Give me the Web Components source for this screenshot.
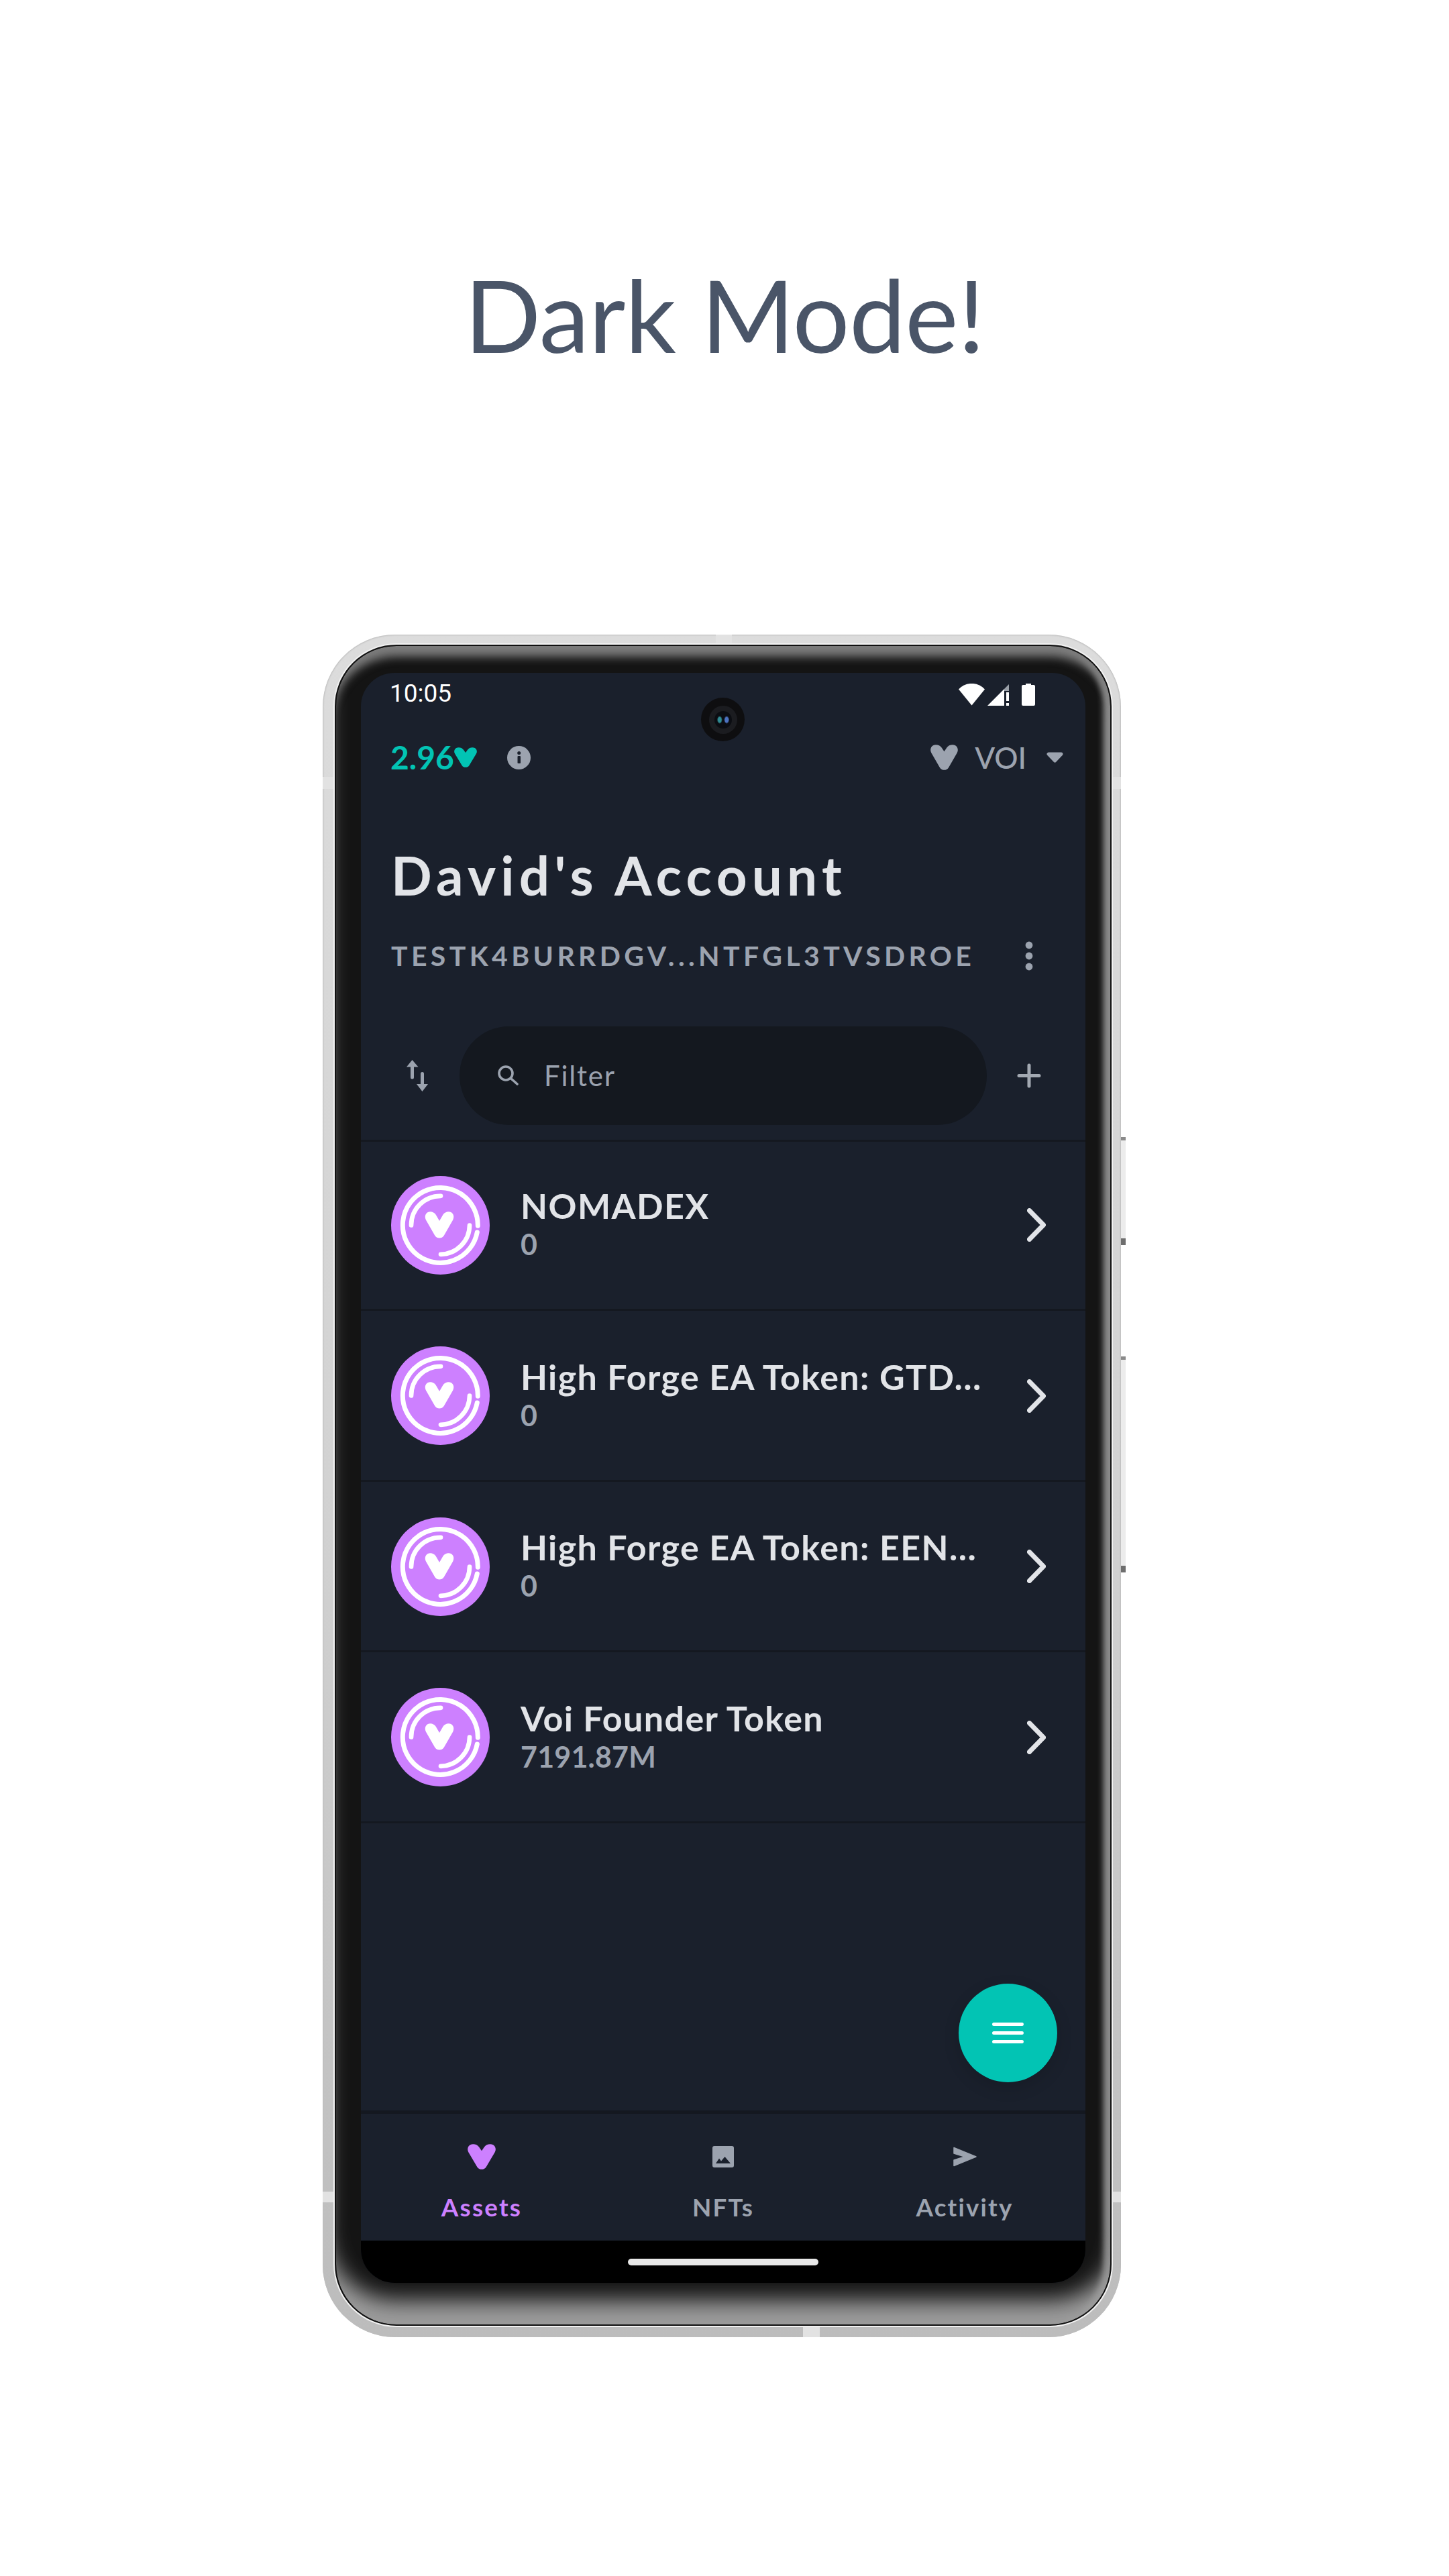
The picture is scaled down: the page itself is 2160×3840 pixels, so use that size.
<!DOCTYPE html>
<html>
<head>
<meta charset="utf-8">
<title>Dark Mode!</title>
<style>
  html, body { margin: 0; padding: 0; background: #fff; }
  body { font-family: 'Lato', 'Noto Sans', sans-serif; }
</style>
</head>
<body>
<store-page>
  <page-title slot="title">Dark Mode!</page-title>
  <phone-frame>
    <status-bar time="10:05"></status-bar>
    <app-bar balance="2.96" network="VOI"></app-bar>
    <account-header name="David's Account" address="TESTK4BURRDGV...NTFGL3TVSDROE"></account-header>
    <filter-bar placeholder="Filter"></filter-bar>
    <asset-list>
      <asset-row name="NOMADEX" amount="0"></asset-row>
      <asset-row name="High Forge EA Token: GTD..." amount="0"></asset-row>
      <asset-row name="High Forge EA Token: EEN..." amount="0"></asset-row>
      <asset-row name="Voi Founder Token" amount="7191.87M"></asset-row>
      <fab-button></fab-button>
    </asset-list>
    <bottom-nav></bottom-nav>
  </phone-frame>
</store-page>

<script>
const HEART = 'M64 42 L48 14 C40 1 22 -3 11 4 C0 11 -3 25 4 38 L44 108 C53 122 75 122 84 108 L124 38 C131 25 128 11 117 4 C106 -3 88 1 80 14 Z';
// the small hearts have a shallower notch than the one on the coin
const HEART_SMALL = 'M64 32 L52 14 C44 1 24 -3 12 4 C1 11 -3 25 4 38 L44 108 C53 122 75 122 84 108 L124 38 C131 25 127 11 116 4 C104 -3 84 1 76 14 Z';

function define(tag, render) {
  customElements.define(tag, class extends HTMLElement {
    constructor() {
      super();
      this.attachShadow({ mode: 'open' });
    }
    connectedCallback() {
      this.shadowRoot.innerHTML = render(this);
    }
  });
}

define('store-page', () => `
  <style>
    :host { display: flex; flex-direction: column; align-items: center; width: 2160px; height: 3840px; background: #fff; }
  </style>
  <slot name="title"></slot>
  <slot></slot>
`);

define('page-title', () => `
  <style>
    :host { display: block; height: 946px; box-sizing: border-box; padding-top: 378px; color: #4a5568; font: 400 150px/180px 'Lato', sans-serif; letter-spacing: -0.6px; white-space: nowrap; }
  </style>
  <slot></slot>
`);

define('phone-frame', () => `
  <style>
    :host { display: block; position: relative; width: 1190px; height: 2538px; box-sizing: border-box; margin-right: 8px; padding: 15px 14px 17px 18px; border-radius: 108px; background: linear-gradient(to bottom, #dcdcdc, #d2d2d2 50%, #bcbcbc); box-shadow: inset 0 0 2px 1px #bdbdbd; }
    .bezel { position: relative; height: 100%; box-sizing: border-box; padding: 40px 37px 62px 37px; border: 2px solid #111; border-radius: 92px; background: #141414; box-shadow: 0 0 0 2px #f2f2f2, inset 0 24px 14px -8px #7c7c7c, inset 0 -50px 32px -14px #9c9c9c, inset -14px 0 9px -4px #8a8a8a; }
    .screen { position: relative; display: flex; flex-direction: column; width: 1080px; height: 2400px; border-radius: 50px; overflow: hidden; background: #1a202c; }
    .camera { position: absolute; left: 507px; top: 37px; width: 65px; height: 65px; border-radius: 50%; background: #0e0e10; display: flex; align-items: center; justify-content: center; }
    .camera i { display: flex; align-items: center; justify-content: center; width: 42px; height: 42px; border-radius: 50%; background: #1b1c20; }
    .camera b { display: block; width: 26px; height: 26px; border-radius: 50%; background: radial-gradient(ellipse 4px 6px at 30% 50%, #2f8a92 60%, transparent 100%), radial-gradient(ellipse 4px 6px at 70% 50%, #4c72c0 60%, transparent 100%), #0b0d12; }
    .band { position: absolute; background: #e2e2e2; }
    .key { position: absolute; left: 100%; width: 7px; background: #ececec; border-top: 5px solid #8a8a8a; border-bottom: 10px solid #6e6e6e; box-sizing: border-box; }
    .lip { position: absolute; left: 278px; right: 280px; top: 14px; height: 4px; background: #555; }
  </style>
  <div class="band" style="left:586px;top:0;width:24px;height:15px"></div>
  <div class="band" style="left:716px;bottom:0;width:25px;height:15px"></div>
  <div class="band" style="left:0;top:212px;width:16px;height:18px"></div>
  <div class="band" style="right:0;top:212px;width:14px;height:18px"></div>
  <div class="band" style="left:0;bottom:201px;width:16px;height:16px"></div>
  <div class="band" style="right:0;bottom:201px;width:14px;height:16px"></div>
  <div class="key" style="top:749px;height:161px"></div>
  <div class="key" style="top:1076px;height:322px"></div>
  <div class="lip"></div>
  <div class="bezel">
    <div class="screen">
      <slot></slot>
      <div class="camera"><i><b></b></i></div>
    </div>
  </div>
`);

define('status-bar', el => `
  <style>
    :host { display: flex; align-items: center; justify-content: space-between; height: 61px; padding: 0 75px 0 43px; flex: none; color: #fff; font: 400 37px/61px 'Roboto', sans-serif; }
    .icons { display: flex; align-items: flex-start; margin-top: 3px; }
    svg { display: block; }
  </style>
  <span>${el.getAttribute('time')}</span>
  <div class="icons">
    <svg width="39" height="33" viewBox="0 0 39 33" fill="#fff"><path d="M0 8.5C11-3 28-3 39 8.5L19.5 32.5Z"/></svg>
    <svg style="margin-left:4px" width="33" height="33" viewBox="0 0 33 33"><path d="M0 33L25 8V33Z" fill="#fff"/><path d="M25 8L32 1V11H25Z" fill="#9aa0a8"/><path d="M28 13h4v13h-4zM28 29h4v4h-4z" fill="#fff"/></svg>
    <svg style="margin-left:18px" width="20" height="33" viewBox="0 0 20 33" fill="#fff"><path d="M6 0h8v2h4a2 2 0 0 1 2 2v27a2 2 0 0 1-2 2H2a2 2 0 0 1-2-2V4a2 2 0 0 1 2-2h4z"/></svg>
  </div>
`);

define('voi-heart', el => `
  <style>:host { display: block; } svg { display: block; }</style>
  <svg width="${el.getAttribute('w')}" height="${el.getAttribute('h')}" viewBox="0 0 128 119" preserveAspectRatio="none" fill="${el.getAttribute('color')}"><path d="${HEART_SMALL}"/></svg>
`);

define('app-bar', el => `
  <style>
    :host { display: flex; align-items: center; height: 130px; padding: 0 33px 0 44px; flex: none; }
    .balance { display: flex; align-items: center; color: #02c4b4; font: 700 48px/60px 'Lato', sans-serif; }
    .info { margin-left: 45px; display: block; }
    .net { margin-left: auto; display: flex; align-items: center; color: #9ca3af; font: 500 44px/60px 'Lato', sans-serif; }
    .net span { margin-left: 25px; }
    .net svg { margin-left: 30px; display: block; }
  </style>
  <div class="balance">${el.getAttribute('balance')}<voi-heart w="34" h="30" color="#02c4b4"></voi-heart></div>
  <svg class="info" width="35" height="35" viewBox="0 0 35 35"><circle cx="17.5" cy="17.5" r="17.5" fill="#9ca3af"/><rect x="15.5" y="15" width="4.5" height="11" rx="1" fill="#1a202c"/><circle cx="17.7" cy="10.5" r="2.5" fill="#1a202c"/></svg>
  <div class="net">
    <voi-heart w="41" h="38" color="#9ca3af"></voi-heart>
    <span>${el.getAttribute('network')}</span>
    <svg width="25" height="16" viewBox="0 0 25 16"><path d="M3 3H22L12.5 13Z" fill="#9ca3af" stroke="#9ca3af" stroke-width="5" stroke-linejoin="round"/></svg>
  </div>
`);

define('account-header', el => `
  <style>
    :host { display: block; flex: none; height: 337px; padding: 0 45px; box-sizing: border-box; }
    .name { padding-top: 65px; color: #e2e4e8; font: 700 80px/90px 'Lato', sans-serif; letter-spacing: 7.2px; white-space: nowrap; }
    .addr { display: flex; align-items: center; justify-content: space-between; margin-top: 46px; padding-right: 33px; color: #9ca3af; font: 700 41px/60px 'Lato', sans-serif; letter-spacing: 5.35px; white-space: nowrap; }
    svg { display: block; }
  </style>
  <div class="name">${el.getAttribute('name')}</div>
  <div class="addr">
    <span>${el.getAttribute('address')}</span>
    <svg width="12" height="44" viewBox="0 0 12 44" fill="#9ca3af"><circle cx="6" cy="6" r="5.4"/><circle cx="6" cy="22" r="5.4"/><circle cx="6" cy="38" r="5.4"/></svg>
  </div>
`);

define('filter-bar', el => `
  <style>
    :host { display: flex; align-items: center; height: 171px; box-sizing: border-box; flex: none; padding: 0 0 24px 68px; border-bottom: 3px solid #141820; }
    svg { display: block; flex: none; }
    .pill { display: flex; align-items: center; width: 786px; height: 147px; margin-left: 47px; padding-left: 57px; box-sizing: border-box; border-radius: 74px; background: #14181f; color: #9ca3af; font: 400 42px/50px 'Lato', sans-serif; letter-spacing: 1.8px; }
    .pill span { margin-left: 38px; }
    .plus { margin-left: 45px; }
  </style>
  <svg width="32" height="47" viewBox="0 0 32 47" fill="#9ca3af">
    <path d="M8 0L17 10.5H10.5V26a2.5 2.5 0 0 1-5 0V10.5H-.5Z" transform="translate(0.5 0)"/>
    <path d="M23.5 47L15 36H21V20.5a2.5 2.5 0 0 1 5 0V36h6Z"/>
  </svg>
  <div class="pill">
    <svg width="31" height="30" viewBox="0 0 31 30" fill="none" stroke="#9ca3af" stroke-width="3.6" stroke-linecap="round"><circle cx="12" cy="12" r="10"/><path d="M19.5 19.5L29 28"/></svg>
    <span>${el.getAttribute('placeholder')}</span>
  </div>
  <svg class="plus" width="36" height="37" viewBox="0 0 36 37" stroke="#a3a9b2" stroke-width="5" stroke-linecap="round"><path d="M18 3V34M3 18.5H33"/></svg>
`);

define('asset-list', () => `
  <style>
    :host { display: block; position: relative; flex: 1; margin-top: -2.5px; }
  </style>
  <slot></slot>
`);

define('voi-coin', () => `
  <style>:host { display: block; flex: none; } svg { display: block; }</style>
  <svg width="147" height="147" viewBox="0 0 147 147" fill="none" stroke="#fff" stroke-linecap="round">
    <circle cx="73.5" cy="73.5" r="73.5" fill="#cd80ff" stroke="none"/>
    <path d="M128.3 84A56 56 0 1 1 129.3 74.3" stroke-width="7"/>
    <path d="M30 73.5A43.5 43.5 0 0 1 74 29.8M117 73.5A43.5 43.5 0 0 1 74 116.8" stroke-width="6.7"/>
    <path d="${HEART}" transform="translate(50.7 53) scale(.3335)" fill="#fff" stroke="none"/>
  </svg>
`);

define('asset-row', el => `
  <style>
    :host { display: flex; align-items: center; height: 254.5px; box-sizing: border-box; padding: 2px 59px 0 45px; border-bottom: 3px solid #141820; }
    .text { margin-left: 46px; flex: 1; min-width: 0; }
    .name { color: #e2e4e8; font: 700 52px/57px 'Lato', sans-serif; letter-spacing: 1.4px; white-space: nowrap; }
    .amount { color: #9ca3af; font: 700 43px/57px 'Lato', sans-serif; letter-spacing: 0.2px; }
    svg { display: block; flex: none; }
  </style>
  <voi-coin></voi-coin>
  <div class="text">
    <div class="name">${el.getAttribute('name')}</div>
    <div class="amount">${el.getAttribute('amount')}</div>
  </div>
  <svg width="28" height="50" viewBox="0 0 28 50" fill="none" stroke="#e2e4e8" stroke-width="7" stroke-linecap="round" stroke-linejoin="round"><path d="M3.5 3.5L24.5 25L3.5 46.5"/></svg>
`);

define('fab-button', () => `
  <style>
    :host { position: absolute; right: 42px; bottom: 42px; width: 147px; height: 147px; border-radius: 50%; background: #02c4b4; display: flex; align-items: center; justify-content: center; box-shadow: 0 8px 24px rgba(0,0,0,.14); }
    svg { display: block; }
  </style>
  <svg width="47" height="31" viewBox="0 0 47 31" fill="#fff"><rect width="47" height="5" rx="2.5"/><rect y="13" width="47" height="5" rx="2.5"/><rect y="26" width="47" height="5" rx="2.5"/></svg>
`);

define('nav-tab', el => `
  <style>
    :host { display: flex; flex-direction: column; align-items: center; flex: 1; color: ${el.hasAttribute('active') ? '#cd80ff' : '#9ca3af'}; font: 700 36.75px/44px 'Lato', sans-serif; letter-spacing: 2.2px; }
    .icon { display: flex; align-items: center; justify-content: center; height: 40px; margin-top: 44px; margin-bottom: 33px; }
  </style>
  <div class="icon"><slot></slot></div>
  <span>${el.getAttribute('label')}</span>
`);

define('bottom-nav', () => `
  <style>
    :host { display: block; flex: none; }
    .tabs { display: flex; height: 189px; border-top: 5px solid #141820; }
    .bar { display: flex; justify-content: center; height: 63px; background: #000; }
    .bar i { display: block; width: 284px; height: 10px; margin-top: 27px; border-radius: 5px; background: #e8e8e8; }
    svg { display: block; }
  </style>
  <div class="tabs">
    <nav-tab label="Assets" active><voi-heart w="42" h="38" color="#cd80ff"></voi-heart></nav-tab>
    <nav-tab label="NFTs"><svg width="32" height="32" viewBox="0 0 32 32"><rect width="32" height="32" rx="3" fill="#9ca3af"/><path d="M5 26L10 18.5L13 22.5L18.5 16L27 26Z" fill="#1a202c"/></svg></nav-tab>
    <nav-tab label="Activity"><svg width="35" height="30" viewBox="0 0 35 30"><path d="M1 1.5L34 15L1 28.5V20L17 15L1 10Z" fill="#9ca3af" stroke="#9ca3af" stroke-width="1.5" stroke-linejoin="round"/></svg></nav-tab>
  </div>
  <div class="bar"><i></i></div>
`);
</script>
</body>
</html>
